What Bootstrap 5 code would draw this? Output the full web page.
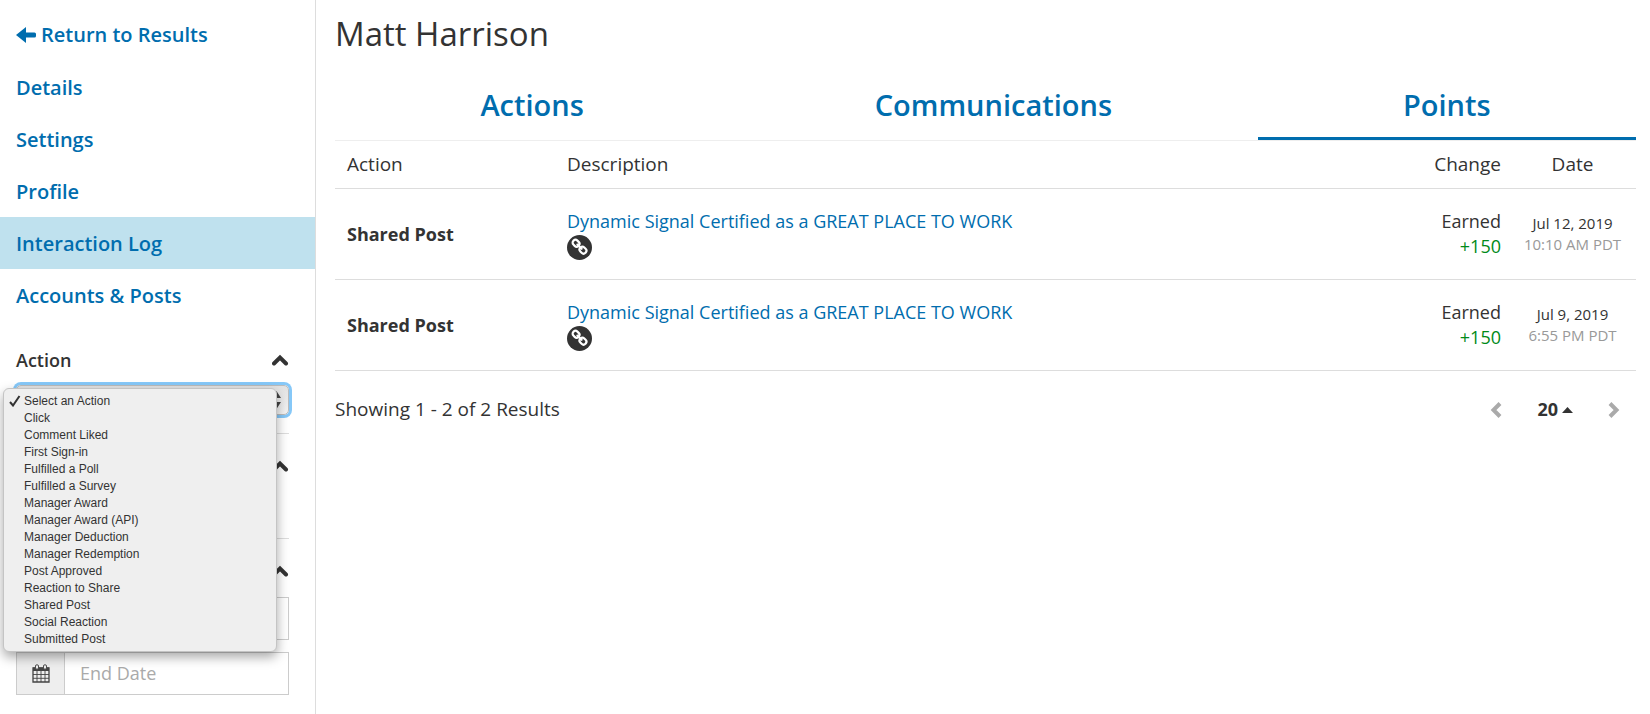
<!DOCTYPE html>
<html lang="en">
<head>
<meta charset="utf-8">
<meta name="viewport" content="width=device-width, initial-scale=1">
<title>Matt Harrison - Interaction Log</title>
<link href="https://cdn.jsdelivr.net/npm/bootstrap@5.3.0/dist/css/bootstrap.min.css" rel="stylesheet">
<style>
  :root { --brand: #006dae; --ink: #333; --line: #ddd; }
  body { font-family: "Open Sans", sans-serif; font-size: 18px; line-height: 25px; color: var(--ink); }
  a { color: var(--brand); text-decoration: none; }

  .side-panel { width: 316px; border-right: 1px solid var(--line); padding-top: 9px; }
  .side-nav .nav-link { color: var(--brand); font-size: 20px; font-weight: 600; line-height: 28px; padding: 13px 16px 11px; }
  .side-nav .nav-link.back-link { padding: 12px 16px; }
  .side-nav .nav-link.active { background: #bfe1ee; }

  .filters { padding: 27px 26px 0 16px; }
  .filter-group { border-bottom: 1px solid var(--line); height: 105px; padding-top: 20px; }
  .filter-group:first-child { height: 86px; padding-top: 0; }
  .filter-group:last-child { border-bottom: 0; height: auto; }
  .filter-toggle { height: 24px; font-size: 18px; font-weight: 600; color: var(--ink); line-height: 24px; }
  .mac-select { height: 30px; margin-top: 13px; font: 12px/18px "Liberation Sans", Arial, sans-serif; appearance: none; padding: 0 20px 0 8px;
    border: 1px solid #bbb; border-radius: 5px; background: linear-gradient(#e2e2e2, #f4f4f4); box-shadow: 0 0 0 3px #86c8f8; outline: 0; }
  .select-arrows { right: 8px; top: 6px; }
  .option-list { left: -13px; top: 3px; width: 274px; z-index: 5; padding: 4px 0 3px; background: #efefef; border: 1px solid #c4c4c4;
    border-radius: 6px; box-shadow: 0 5px 12px rgba(0,0,0,.35); font: 12px/17px "Liberation Sans", Arial, sans-serif; }
  .option-list li { padding-left: 20px; }
  .option-list svg { left: 4px; top: 2px; }
  .date-box { height: 43px; margin-top: 12px; }
  .filter-toggle + .date-box { margin-top: 14px; }
  .date-box .input-group-text { width: 49px; background: #eee; border-color: #ccc; border-radius: 0; justify-content: center; color: #444; padding: 0; }
  .date-box .form-control { font-size: 18px; border-color: #ccc; border-radius: 0; padding: 0 15px; }
  .date-box .form-control::placeholder { color: #aaa; }

  .content-area { padding: 10px 14px 24px 19px; }
  .person-name { font-size: 33px; line-height: 48px; font-weight: 400; }
  .section-tabs { border-bottom: 1px solid #eee; margin-top: 12px; }
  .section-tabs .nav-link { color: var(--brand); font-size: 29px; line-height: 40px; font-weight: 600; padding: 15px 0 12px; border-bottom: 3px solid transparent; border-radius: 0; }
  .section-tabs .nav-link.active { border-bottom-color: var(--brand); }

  .log-table { color: var(--ink); --bs-table-color: var(--ink); border-color: var(--line); border-collapse: separate; border-spacing: 0; }
  .log-table th, .log-table td { padding: 11px 12px; border-bottom: 1px solid var(--line); vertical-align: middle; }
  .log-table thead th { font-size: 19px; font-weight: 400; }
  .log-table tbody td, .log-table tbody th { padding-top: 20px; padding-bottom: 20px; }
  .log-table tbody td.post-cell { padding-bottom: 19px; }
  .post-cell svg { margin-top: 1px; }
  .col-what { width: 220px; }
  .col-when { width: 123px; }
  .log-table .when-cell { padding-left: 0; padding-right: 4px; text-align: center; }
  .when-cell time { display: block; font-size: 15px; line-height: 21px; }
  .gain { color: #008a17; }
  .dim { color: #999; }
  .log-footer { font-size: 19px; margin-top: 26px; }
  .pager { gap: 35px; padding-right: 16px; }
  .page-size { font-size: 18px; font-weight: 700; line-height: 25px; color: var(--ink); }
</style>
</head>
<body>
<div class="d-flex min-vh-100">
  <aside class="side-panel flex-shrink-0">
    <nav class="nav flex-column side-nav" aria-label="Member">
      <a class="nav-link back-link d-flex align-items-center" href="#"><svg class="me-1" width="21" height="18" viewBox="0 0 21 18" fill="currentColor" aria-hidden="true"><path d="M0 9 10 1v5.500h8.500a1.500 1.500 0 0 1 1.500 1.500v2a1.500 1.500 0 0 1-1.500 1.500H10V17z"/></svg>Return to Results</a>
      <a class="nav-link" href="#">Details</a>
      <a class="nav-link" href="#">Settings</a>
      <a class="nav-link" href="#">Profile</a>
      <a class="nav-link active" href="#" aria-current="page">Interaction Log</a>
      <a class="nav-link" href="#">Accounts &amp; Posts</a>
    </nav>
    <svg class="d-none" aria-hidden="true">
      <symbol id="chev-up" viewBox="0 0 17 12"><path d="M2 9.500 8 3.500l6 6" fill="none" stroke="currentColor" stroke-width="4" stroke-linecap="round" stroke-linejoin="miter"/></symbol>
      <symbol id="calendar" viewBox="0 0 18 19"><path d="M1 4h16v14H1z" fill="none" stroke="currentColor" stroke-width="1.300"/><path d="M1 3.500h16v3.500H1z" fill="currentColor"/><rect x="3.500" y=".8" width="3" height="4.400" rx="1.300" fill="#eee" stroke="currentColor"/><rect x="11.500" y=".8" width="3" height="4.400" rx="1.300" fill="#eee" stroke="currentColor"/><path d="M5 7v11M9 7v11M13 7v11M1 10.500h16M1 14.300h16" stroke="currentColor" stroke-width=".9"/></symbol>
      <symbol id="chain" viewBox="0 0 25 25"><circle cx="12.500" cy="12.500" r="12.500" fill="#333"/><g fill="none" stroke="#fff" stroke-width="2.200" transform="translate(0 -.8) rotate(45 12.500 12.500)"><rect x="4" y="9.700" width="7.200" height="5.600" rx="2.700"/><rect x="13.800" y="9.700" width="7.200" height="5.600" rx="2.700"/><path d="M9.500 12.500h6" stroke-linecap="round"/></g></symbol>
    </svg>
    <form class="filters">
      <section class="filter-group">
        <button type="button" class="filter-toggle btn p-0 border-0 w-100 d-flex justify-content-between align-items-center">
          <span>Action</span><svg width="17" height="12" aria-hidden="true"><use href="#chev-up"/></svg>
        </button>
        <div class="position-relative">
          <select class="mac-select w-100 d-block" aria-label="Action"><option>Select an Action</option></select>
          <svg class="select-arrows position-absolute" width="9" height="18" viewBox="0 0 9 18" fill="#444" aria-hidden="true"><path d="M0 7h9L4.500 0zM0 11h9l-4.500 7z"/></svg>
          <ul class="option-list list-unstyled mb-0 position-absolute" role="listbox" aria-label="Action options">
            <li class="position-relative" role="option" aria-selected="true"><svg class="position-absolute" width="14" height="12" viewBox="0 0 14 12" aria-hidden="true"><path d="M2 7 5 10.500 11.500 1" fill="none" stroke="#333" stroke-width="2"/></svg>Select an Action</li>
            <li role="option">Click</li>
            <li role="option">Comment Liked</li>
            <li role="option">First Sign-in</li>
            <li role="option">Fulfilled a Poll</li>
            <li role="option">Fulfilled a Survey</li>
            <li role="option">Manager Award</li>
            <li role="option">Manager Award (API)</li>
            <li role="option">Manager Deduction</li>
            <li role="option">Manager Redemption</li>
            <li role="option">Post Approved</li>
            <li role="option">Reaction to Share</li>
            <li role="option">Shared Post</li>
            <li role="option">Social Reaction</li>
            <li role="option">Submitted Post</li>
          </ul>
        </div>
      </section>
      <section class="filter-group">
        <button type="button" class="filter-toggle btn p-0 border-0 w-100 d-flex justify-content-end align-items-center" aria-label="Collapse">
          <svg width="17" height="12" aria-hidden="true"><use href="#chev-up"/></svg>
        </button>
      </section>
      <section class="filter-group">
        <button type="button" class="filter-toggle btn p-0 border-0 w-100 d-flex justify-content-end align-items-center" aria-label="Collapse">
          <svg width="17" height="12" aria-hidden="true"><use href="#chev-up"/></svg>
        </button>
        <div class="date-box input-group">
          <label class="input-group-text" for="startDate"><svg width="18" height="19" aria-hidden="true"><use href="#calendar"/></svg></label>
          <input class="form-control" id="startDate" type="text" aria-label="Start">
        </div>
        <div class="date-box input-group">
          <label class="input-group-text" for="endDate"><svg width="18" height="19" aria-hidden="true"><use href="#calendar"/></svg></label>
          <input class="form-control" id="endDate" type="text" placeholder="End Date" aria-label="End Date">
        </div>
      </section>
    </form>
  </aside>

  <main class="content-area flex-grow-1">
    <h1 class="person-name mb-0">Matt Harrison</h1>
    <nav class="nav nav-fill section-tabs">
      <a class="nav-link nav-item" href="#">Actions</a>
      <a class="nav-link nav-item" href="#">Communications</a>
      <a class="nav-link nav-item active" href="#" aria-current="page">Points</a>
    </nav>
    <table class="table log-table mb-0">
      <thead>
        <tr><th class="col-what" scope="col">Action</th><th scope="col">Description</th><th class="text-end" scope="col">Change</th><th class="col-when when-cell" scope="col">Date</th></tr>
      </thead>
      <tbody>
        <tr>
          <th scope="row">Shared Post</th>
          <td class="post-cell"><a href="#">Dynamic Signal Certified as a GREAT PLACE TO WORK</a><svg class="d-block" width="25" height="25" aria-hidden="true"><use href="#chain"/></svg></td>
          <td class="text-end">Earned<div class="gain">+150</div></td>
          <td class="when-cell"><time>Jul 12, 2019</time><time class="dim">10:10 AM PDT</time></td>
        </tr>
        <tr>
          <th scope="row">Shared Post</th>
          <td class="post-cell"><a href="#">Dynamic Signal Certified as a GREAT PLACE TO WORK</a><svg class="d-block" width="25" height="25" aria-hidden="true"><use href="#chain"/></svg></td>
          <td class="text-end">Earned<div class="gain">+150</div></td>
          <td class="when-cell"><time>Jul 9, 2019</time><time class="dim">6:55 PM PDT</time></td>
        </tr>
      </tbody>
    </table>
    <div class="log-footer d-flex justify-content-between align-items-center">
      <span>Showing 1 - 2 of 2 Results</span>
      <div class="pager d-flex align-items-center">
        <button type="button" class="btn p-0 border-0 d-flex" aria-label="Previous page"><svg width="12" height="18" viewBox="0 0 12 18" aria-hidden="true"><path d="M10 2.500 3.500 9l6.500 6.500" fill="none" stroke="#aaa" stroke-width="4"/></svg></button>
        <button type="button" class="page-size btn p-0 border-0 d-flex align-items-center gap-1">20 <svg width="11" height="6" viewBox="0 0 11 6" aria-hidden="true"><path d="M0 6h11L5.500 0z" fill="#333"/></svg></button>
        <button type="button" class="btn p-0 border-0 d-flex" aria-label="Next page"><svg width="12" height="18" viewBox="0 0 12 18" aria-hidden="true"><path d="M2 2.500 8.500 9 2 15.500" fill="none" stroke="#aaa" stroke-width="4"/></svg></button>
      </div>
    </div>
  </main>
</div>
<script src="https://cdn.jsdelivr.net/npm/bootstrap@5.3.0/dist/js/bootstrap.bundle.min.js"></script>
</body>
</html>
